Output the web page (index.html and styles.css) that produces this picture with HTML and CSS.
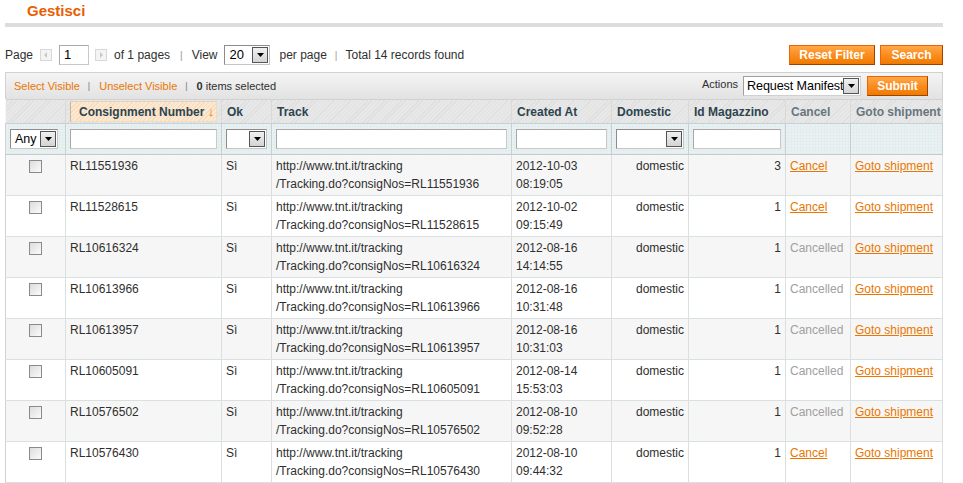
FILE: index.html
```html
<!DOCTYPE html>
<html>
<head>
<meta charset="utf-8">
<link rel="stylesheet" href="styles.css">
</head>
<body>
<div class="wrap">
  <div class="content-header"><h3>Gestisci</h3></div>

  <div class="pager-row">
    <div class="pager">
      <span>Page</span>
      <span class="arrow-btn prev"><svg width="10" height="10" viewBox="0 0 10 10"><path d="M6 2 L3 5 L6 8 Z" fill="#c8c8c8"/></svg></span>
      <span class="page-input">1</span>
      <span class="arrow-btn next"><svg width="10" height="10" viewBox="0 0 10 10"><path d="M4 2 L7 5 L4 8 Z" fill="#c8c8c8"/></svg></span>
      <span class="ofpages">of 1 pages</span>
      <span class="sep">|</span>
      <span>View</span>
      <span class="sel sel-view"><span class="val">20</span><span class="arr"><svg width="7" height="4" viewBox="0 0 7 4"><path d="M0 0 H7 L3.5 4 Z" fill="#000"/></svg></span></span>
      <span class="perpage">per page</span>
      <span class="sep sep2">|</span>
      <span>Total 14 records found</span>
    </div>
    <div class="pager-buttons">
      <span class="btn btn-reset">Reset Filter</span>
      <span class="btn btn-search">Search</span>
    </div>
  </div>

  <div class="massaction">
    <div class="mass-left">
      <a class="mlink">Select Visible</a>
      <span class="msep">|</span>
      <a class="mlink">Unselect Visible</a>
      <span class="msep">|</span>
      <span class="selected"><b>0</b> items selected</span>
    </div>
    <div class="mass-right">
      <span class="actions-label">Actions</span>
      <span class="sel sel-actions"><span class="val">Request Manifest</span><span class="arr"><svg width="7" height="4" viewBox="0 0 7 4"><path d="M0 0 H7 L3.5 4 Z" fill="#000"/></svg></span></span>
      <span class="btn btn-submit">Submit</span>
    </div>
  </div>

  <table class="grid">
    <colgroup>
      <col style="width:60px"><col style="width:156px"><col style="width:50px"><col style="width:240px"><col style="width:100px"><col style="width:77px"><col style="width:97px"><col style="width:65px"><col style="width:92px">
    </colgroup>
    <thead>
      <tr class="headings">
        <th></th>
        <th class="sorted"><span class="sort-box">Consignment Number <span class="sort-arrow">↓</span></span></th>
        <th>Ok</th>
        <th>Track</th>
        <th>Created At</th>
        <th>Domestic</th>
        <th>Id Magazzino</th>
        <th class="nosort">Cancel</th>
        <th class="nosort">Goto shipment</th>
      </tr>
      <tr class="filter">
        <th><span class="sel sel-any"><span class="val">Any</span><span class="arr"><svg width="7" height="4" viewBox="0 0 7 4"><path d="M0 0 H7 L3.5 4 Z" fill="#000"/></svg></span></span></th>
        <th><span class="finput"></span></th>
        <th><span class="sel sel-full"><span class="val"></span><span class="arr"><svg width="7" height="4" viewBox="0 0 7 4"><path d="M0 0 H7 L3.5 4 Z" fill="#000"/></svg></span></span></th>
        <th><span class="finput"></span></th>
        <th><span class="finput"></span></th>
        <th><span class="sel sel-full"><span class="val"></span><span class="arr"><svg width="7" height="4" viewBox="0 0 7 4"><path d="M0 0 H7 L3.5 4 Z" fill="#000"/></svg></span></span></th>
        <th><span class="finput"></span></th>
        <th></th>
        <th></th>
      </tr>
    </thead>
    <tbody>
      <tr class="odd">
        <td class="c"><span class="cb"></span></td><td>RL11551936</td><td>Sì</td>
        <td>http://www.tnt.it/tracking<br>/Tracking.do?consigNos=RL11551936</td>
        <td>2012-10-03<br>08:19:05</td><td class="r">domestic</td><td class="r">3</td>
        <td><a class="act">Cancel</a></td><td><a class="act">Goto shipment</a></td>
      </tr>
      <tr>
        <td class="c"><span class="cb"></span></td><td>RL11528615</td><td>Sì</td>
        <td>http://www.tnt.it/tracking<br>/Tracking.do?consigNos=RL11528615</td>
        <td>2012-10-02<br>09:15:49</td><td class="r">domestic</td><td class="r">1</td>
        <td><a class="act">Cancel</a></td><td><a class="act">Goto shipment</a></td>
      </tr>
      <tr class="odd">
        <td class="c"><span class="cb"></span></td><td>RL10616324</td><td>Sì</td>
        <td>http://www.tnt.it/tracking<br>/Tracking.do?consigNos=RL10616324</td>
        <td>2012-08-16<br>14:14:55</td><td class="r">domestic</td><td class="r">1</td>
        <td class="done">Cancelled</td><td><a class="act">Goto shipment</a></td>
      </tr>
      <tr>
        <td class="c"><span class="cb"></span></td><td>RL10613966</td><td>Sì</td>
        <td>http://www.tnt.it/tracking<br>/Tracking.do?consigNos=RL10613966</td>
        <td>2012-08-16<br>10:31:48</td><td class="r">domestic</td><td class="r">1</td>
        <td class="done">Cancelled</td><td><a class="act">Goto shipment</a></td>
      </tr>
      <tr class="odd">
        <td class="c"><span class="cb"></span></td><td>RL10613957</td><td>Sì</td>
        <td>http://www.tnt.it/tracking<br>/Tracking.do?consigNos=RL10613957</td>
        <td>2012-08-16<br>10:31:03</td><td class="r">domestic</td><td class="r">1</td>
        <td class="done">Cancelled</td><td><a class="act">Goto shipment</a></td>
      </tr>
      <tr>
        <td class="c"><span class="cb"></span></td><td>RL10605091</td><td>Sì</td>
        <td>http://www.tnt.it/tracking<br>/Tracking.do?consigNos=RL10605091</td>
        <td>2012-08-14<br>15:53:03</td><td class="r">domestic</td><td class="r">1</td>
        <td class="done">Cancelled</td><td><a class="act">Goto shipment</a></td>
      </tr>
      <tr class="odd">
        <td class="c"><span class="cb"></span></td><td>RL10576502</td><td>Sì</td>
        <td>http://www.tnt.it/tracking<br>/Tracking.do?consigNos=RL10576502</td>
        <td>2012-08-10<br>09:52:28</td><td class="r">domestic</td><td class="r">1</td>
        <td class="done">Cancelled</td><td><a class="act">Goto shipment</a></td>
      </tr>
      <tr>
        <td class="c"><span class="cb"></span></td><td>RL10576430</td><td>Sì</td>
        <td>http://www.tnt.it/tracking<br>/Tracking.do?consigNos=RL10576430</td>
        <td>2012-08-10<br>09:44:32</td><td class="r">domestic</td><td class="r">1</td>
        <td><a class="act">Cancel</a></td><td><a class="act">Goto shipment</a></td>
      </tr>
    </tbody>
  </table>
</div>
</body>
</html>
```
FILE: styles.css
```css
html, body {
  margin: 0;
  padding: 0;
  background: #fff;
}
body {
  font-family: "Liberation Sans", Arial, sans-serif;
  font-size: 12px;
  color: #2f2f2f;
}
.wrap {
  margin-left: 5px;
  width: 938px;
}
.content-header {
  height: 23px;
  border-bottom: 4px solid #dddddd;
  padding-left: 22px;
}
.content-header h3 {
  margin: 0;
  font-size: 15px;
  line-height: 22px;
  font-weight: bold;
  color: #eb5e00;
}

/* pager */
.pager-row {
  margin-top: 18px;
  height: 20px;
  display: flex;
  justify-content: space-between;
  align-items: center;
}
.pager {
  display: flex;
  align-items: center;
  height: 20px;
  white-space: nowrap;
}
.arrow-btn {
  width: 10px;
  height: 10px;
  border: 1px solid #d8d8d8;
  background: #f4f4f4;
  display: inline-flex;
  box-sizing: content-box;
}
.arrow-btn.prev { margin-left: 7px; }
.arrow-btn.next { margin-left: 6px; }
.page-input {
  margin-left: 7px;
  width: 28px;
  height: 18px;
  border: 1px solid #aaa;
  border-color: #aaa #c8c8c8 #c8c8c8 #aaa;
  line-height: 18px;
  box-sizing: content-box;
  text-indent: 4px;
  font-size: 13px;
  color: #000;
}
.ofpages { margin-left: 7px; }
.sep {
  margin: 0 9px 0 10px;
  color: #999;
  font-size: 10px;
}
.sep.sep2 {
  margin: 0 8px 0 8px;
}
.sel {
  display: inline-flex;
  align-items: center;
  height: 20px;
  box-sizing: border-box;
  border: 1px solid #9a9a9a;
  border-color: #8c8c8c #c5c5c5 #c5c5c5 #8c8c8c;
  background: #fff;
  color: #000;
  overflow: hidden;
  position: relative;
  font-weight: normal;
}
.sel .val {
  flex: 1;
  padding-left: 4px;
  white-space: nowrap;
  overflow: hidden;
  font-size: 13px;
  line-height: 18px;
  font-weight: normal;
}
.sel .arr {
  width: 14px;
  height: 14px;
  margin: 1px 1px 1px 0;
  border: 1px solid #555;
  background: linear-gradient(#f0f0f0, #d4d4d4);
  display: flex;
  align-items: center;
  justify-content: center;
  flex: none;
}
.sel-view {
  width: 46px;
  margin-left: 7px;
}
.perpage { margin-left: 9px; }
.pager-buttons {
  display: flex;
  gap: 5px;
}
.btn {
  display: inline-block;
  height: 20px;
  box-sizing: border-box;
  line-height: 18px;
  padding: 0 7px;
  border: 1px solid;
  border-color: #ed6502 #a04300 #a04300 #ed6502;
  background: linear-gradient(#ffa84a 0%, #fb8f22 45%, #f07a00 100%);
  color: #fff;
  font-weight: bold;
  font-size: 12px;
  text-align: center;
  white-space: nowrap;
}
.btn-reset { width: 86px; }
.btn-search { width: 63px; }
.btn-submit { width: 61px; margin-left: 6px; height: 20px; }

/* massaction */
.massaction {
  margin-top: 7px;
  height: 26px;
  border: 1px solid #d1d1d1;
  border-bottom: 0;
  background: linear-gradient(#f4f4f4, #e2e2e2);
  display: flex;
  justify-content: space-between;
  align-items: center;
  padding: 0 14px 0 8px;
  font-size: 11px;
}
.mass-left {
  display: flex;
  align-items: center;
  white-space: nowrap;
}
.mlink {
  color: #ea7601;
}
.msep {
  margin: 0 9px 0 8px;
  color: #777;
  font-size: 9px;
}
.selected { color: #2f2f2f; }
.mass-right {
  display: flex;
  align-items: center;
  margin-top: -1px;
}
.actions-label {
  margin-right: 5px;
  color: #2f2f2f;
  margin-top: -4px;
}
.sel-actions {
  width: 118px;
  height: 20px;
  border-color: #a0a0a0 #d0d0d0 #d0d0d0 #a0a0a0;
}
.sel-actions .val {
  font-size: 12.6px;
  padding-left: 3px;
  padding-right: 0;
  overflow: visible;
  letter-spacing: -0.1px;
}
.sel-actions .arr {
  position: absolute;
  right: 0;
  top: 1px;
  margin: 0 1px 0 0;
}

/* grid */
.grid {
  width: 938px;
  border-collapse: collapse;
  table-layout: fixed;
  border: 1px solid #d1d1d1;
}
.grid th, .grid td {
  box-sizing: border-box;
}
.headings th {
  height: 23px;
  padding: 0 5px;
  text-align: left;
  font-weight: bold;
  color: #2d444f;
  white-space: nowrap;
  border-left: 1px solid #f7f7f7;
  border-right: 1px solid #d9d9d9;
  border-bottom: 1px solid #c2d3d7;
  background: repeating-linear-gradient(135deg, #e9e9e9 0 1px, #dddddd 1px 2px, #e9e9e9 2px 3px);
}
.headings th.nosort {
  color: #67767e;
  font-weight: bold;
}
.headings th.sorted {
  padding: 1px 4px 1px 4px;
}
.sort-box {
  display: block;
  height: 21px;
  box-sizing: border-box;
  line-height: 19px;
  padding-left: 8px;
  border: 1px solid #f1dcc0;
  border-left-color: #c8b49b;
  border-top-color: #e5d3bd;
  background: repeating-linear-gradient(135deg, #fde9d2 0 1px, #f6dcbc 1px 2px, #fde9d2 2px 3px);
}
.sort-arrow {
  color: #f06a00;
  font-weight: normal;
  margin-left: 0;
  font-size: 13px;
}
.filter th {
  height: 31px;
  padding: 0 4px 0 4px;
  background-color: #e0eaec;
  background-image:
    linear-gradient(rgba(255,255,255,0.35) 1px, transparent 1px),
    linear-gradient(90deg, rgba(255,255,255,0.35) 1px, transparent 1px);
  background-size: 3px 3px;
  border-right: 1px solid #c6d0d2;
  border-bottom: 1px solid #c2cbcd;
  text-align: left;
  vertical-align: middle;
  font-weight: normal;
}
.finput {
  display: block;
  height: 20px;
  box-sizing: border-box;
  border: 1px solid #aaa;
  border-color: #a8a8a8 #c9c9c9 #c9c9c9 #a8a8a8;
  background: #fff;
}
.sel-any {
  width: 48px;
  display: flex;
}
.sel-any .val {
  font-size: 12.5px;
}
.sel-full {
  width: 100%;
  display: flex;
}
.grid td {
  padding: 2px 4px;
  line-height: 18px;
  vertical-align: top;
  border-right: 1px solid #dadfe0;
  border-bottom: 1px solid #dadfe0;
  white-space: nowrap;
  overflow: hidden;
  height: 41px;
}
.grid tr.odd td {
  background: #f6f6f6;
}
.grid td.c { text-align: center; }
.grid td.r { text-align: right; }
.cb {
  display: inline-block;
  width: 11px;
  height: 11px;
  margin-top: 3px;
  margin-right: 1px;
  border: 1px solid #8a8a8a;
  background: linear-gradient(135deg, #dcdcdc, #fbfbfb);
  vertical-align: top;
}
a.act {
  color: #ea7601;
  text-decoration: underline;
}
td.done {
  color: #a0a0a0;
}
```
